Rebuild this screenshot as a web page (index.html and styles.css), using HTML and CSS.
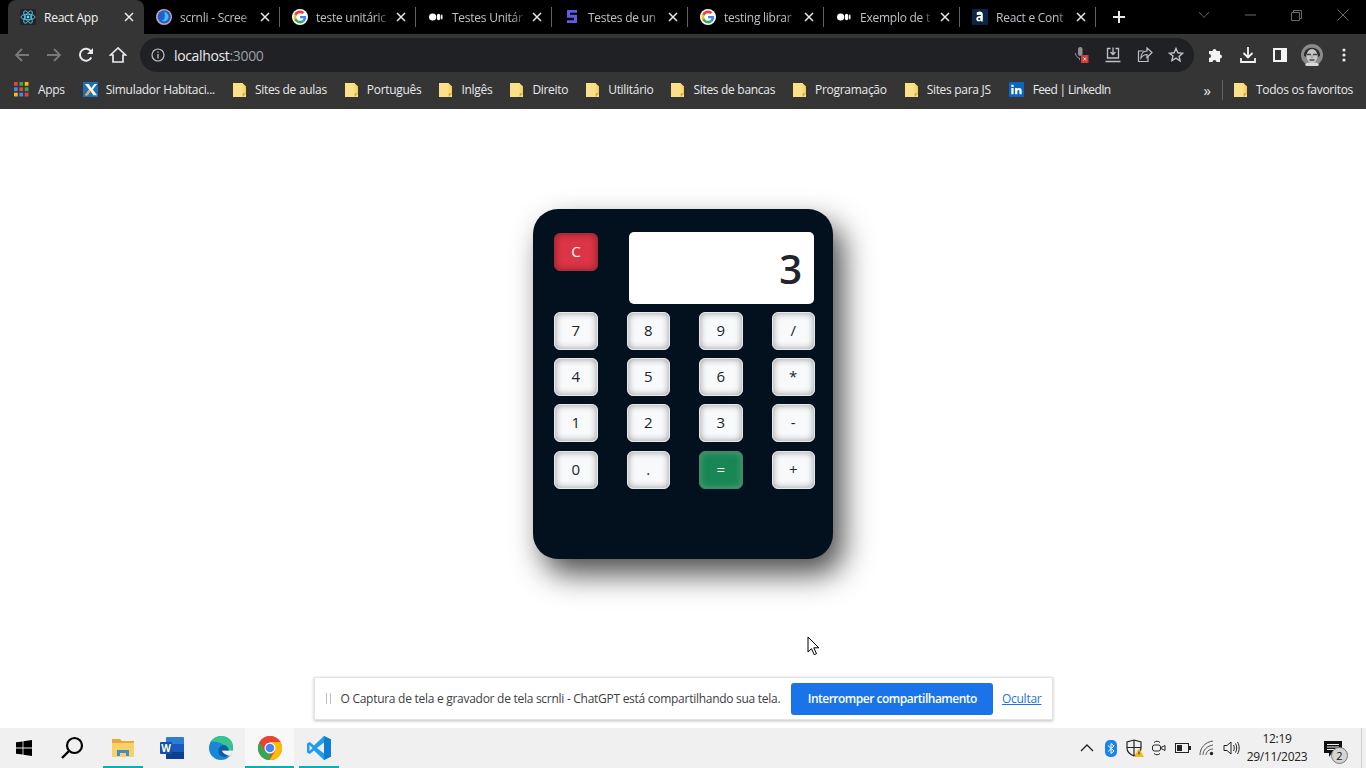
FILE: index.html
```html
<!DOCTYPE html>
<html lang="en">
<head>
    <meta charset="UTF-8">
    <title>React App</title>
    <link rel="stylesheet" href="styles.css">
</head>
<body>
    <svg class="sprite" xmlns="http://www.w3.org/2000/svg">
        <symbol id="ic-google" viewBox="-6 -6 60 60">
            <circle cx="24" cy="24" r="30" fill="#fff"/>
            <path fill="#EA4335" d="M24 9.5c3.54 0 6.71 1.22 9.21 3.6l6.85-6.85C35.9 2.38 30.47 0 24 0 14.62 0 6.51 5.38 2.56 13.22l7.98 6.19C12.43 13.72 17.74 9.5 24 9.5z"/>
            <path fill="#4285F4" d="M46.98 24.55c0-1.57-.15-3.09-.38-4.55H24v9.02h12.94c-.58 2.96-2.26 5.48-4.78 7.18l7.73 6c4.51-4.18 7.09-10.36 7.09-17.65z"/>
            <path fill="#FBBC05" d="M10.53 28.59c-.48-1.45-.76-2.99-.76-4.59s.27-3.14.76-4.59l-7.98-6.19C.92 16.46 0 20.12 0 24c0 3.88.92 7.54 2.56 10.78l7.97-6.19z"/>
            <path fill="#34A853" d="M24 48c6.48 0 11.93-2.13 15.89-5.81l-7.73-6c-2.15 1.45-4.92 2.3-8.16 2.3-6.26 0-11.57-4.22-13.47-9.91l-7.98 6.19C6.51 42.62 14.62 48 24 48z"/>
        </symbol>
        <symbol id="ic-medium" viewBox="0 0 16 16">
            <circle cx="4.6" cy="8" r="3.6" fill="#fff"/>
            <ellipse cx="10.6" cy="8" rx="1.8" ry="3.3" fill="#fff"/>
            <ellipse cx="13.8" cy="8" rx=".8" ry="2.8" fill="#fff"/>
        </symbol>
        <symbol id="ic-folder" viewBox="0 0 12 14">
            <path d="M0 1h8.600L12 4v10H0z" fill="#fdd663"/>
            <path d="M0 1h9v9.500h3V14H0z" fill="#fbe08a"/>
            <path d="M9 14v-3.500h3z" fill="#c9a63c"/>
        </symbol>
        <symbol id="ic-close" viewBox="0 0 10 10">
            <path d="M1 1l8 8M9 1L1 9" stroke="#e8eaed" stroke-width="1.5" fill="none"/>
        </symbol>
    </svg>

    <div class="tabstrip">
        <div class="tab tab-active">
            <svg class="tab-icon" viewBox="0 0 16 16">
                <rect width="16" height="16" rx="2" fill="#20232a"/>
                <circle cx="8" cy="8" r="1.4" fill="#61dafb"/>
                <g fill="none" stroke="#61dafb" stroke-width=".8">
                    <ellipse cx="8" cy="8" rx="7" ry="2.8"/>
                    <ellipse cx="8" cy="8" rx="7" ry="2.8" transform="rotate(60 8 8)"/>
                    <ellipse cx="8" cy="8" rx="7" ry="2.8" transform="rotate(120 8 8)"/>
                </g>
            </svg>
            <span class="tab-title">React App</span>
            <svg class="tab-close"><use href="#ic-close"/></svg>
        </div>
        <div class="tab">
            <svg class="tab-icon" viewBox="0 0 16 16">
                <circle cx="8" cy="8" r="8" fill="#d9a0b0"/>
                <circle cx="8.200" cy="7.800" r="6.600" fill="#1667c9"/>
                <path d="M8 3a5 5 0 0 1 4.500 6 5 5 0 0 1-7 2.700c3 0 4.500-4.500 2.500-8.700z" fill="#56b4f2"/>
            </svg>
            <span class="tab-title">scrnli - Scree</span>
            <svg class="tab-close"><use href="#ic-close"/></svg>
        </div>
        <div class="tab">
            <svg class="tab-icon"><use href="#ic-google"/></svg>
            <span class="tab-title">teste unitáric</span>
            <svg class="tab-close"><use href="#ic-close"/></svg>
        </div>
        <div class="tab">
            <svg class="tab-icon"><use href="#ic-medium"/></svg>
            <span class="tab-title">Testes Unitár</span>
            <svg class="tab-close"><use href="#ic-close"/></svg>
        </div>
        <div class="tab">
            <svg class="tab-icon" viewBox="0 0 16 16">
                <path d="M3 1h10v2.800H6v2h7V14H3v-2.800h7V8.800H3z" fill="#5c5ce6"/>
            </svg>
            <span class="tab-title">Testes de un</span>
            <svg class="tab-close"><use href="#ic-close"/></svg>
        </div>
        <div class="tab">
            <svg class="tab-icon"><use href="#ic-google"/></svg>
            <span class="tab-title">testing librar</span>
            <svg class="tab-close"><use href="#ic-close"/></svg>
        </div>
        <div class="tab">
            <svg class="tab-icon"><use href="#ic-medium"/></svg>
            <span class="tab-title">Exemplo de t</span>
            <svg class="tab-close"><use href="#ic-close"/></svg>
        </div>
        <div class="tab">
            <svg class="tab-icon" viewBox="0 0 16 16">
                <rect width="16" height="16" rx="1" fill="#0b2545"/>
                <path d="M4.800 3.200c3-1.200 6-.8 6 2.200v7h-1.800l-.2-1c-1.500 1.500-4.500 1.300-4.500-1.400 0-2.500 3-3 4.700-2.900 0-1.800-2-1.700-4.200-1z" fill="#fff"/>
                <circle cx="7.300" cy="9.900" r="1.100" fill="#0b2545"/>
            </svg>
            <span class="tab-title">React e Cont</span>
            <svg class="tab-close"><use href="#ic-close"/></svg>
        </div>
        <div class="tab-new">
            <svg width="14" height="14" viewBox="0 0 14 14"><path d="M7 1v12M1 7h12" stroke="#e8eaed" stroke-width="2"/></svg>
        </div>
        <div class="win-controls">
            <svg width="12" height="8" viewBox="0 0 12 8"><path d="M1 1l5 5.500L11 1" fill="none" stroke="#5f5f5f"/></svg>
            <svg width="11" height="2" viewBox="0 0 11 2"><path d="M0 1h11" stroke="#6a6a6a"/></svg>
            <svg width="11" height="11" viewBox="0 0 11 11"><path d="M.5 2.500h8v8h-8zM2.500 2.500v-2h8v8h-2" fill="none" stroke="#6a6a6a"/></svg>
            <svg width="12" height="12" viewBox="0 0 12 12"><path d="M.5 .5l11 11M11.500 .5l-11 11" stroke="#6a6a6a"/></svg>
        </div>
    </div>

    <div class="toolbar">
        <div class="nav-btn">
            <svg width="16" height="16" viewBox="0 0 16 16"><path d="M15 8H2M8 2L2 8l6 6" fill="none" stroke="#77797c" stroke-width="1.800"/></svg>
        </div>
        <div class="nav-btn">
            <svg width="16" height="16" viewBox="0 0 16 16"><path d="M1 8h13M8 2l6 6-6 6" fill="none" stroke="#77797c" stroke-width="1.800"/></svg>
        </div>
        <div class="nav-btn">
            <svg width="16" height="16" viewBox="0 0 16 16"><path d="M13.300 10.500A6 6 0 1 1 13 4.500" fill="none" stroke="#e8eaed" stroke-width="2"/><path d="M15 1v6H9z" fill="#e8eaed"/></svg>
        </div>
        <div class="nav-btn">
            <svg width="18" height="18" viewBox="0 0 18 18"><path d="M9 2L1.500 9H4v7h10V9h2.500z" fill="none" stroke="#e8eaed" stroke-width="1.700"/></svg>
        </div>
        <div class="omnibox">
            <svg class="omni-info" width="14" height="14" viewBox="0 0 14 14"><circle cx="7" cy="7" r="6" fill="none" stroke="#bdc1c6" stroke-width="1.200"/><path d="M7 6v4.500M7 3.500v1.300" stroke="#bdc1c6" stroke-width="1.300"/></svg>
            <span class="omni-url">localhost<span class="omni-port">:3000</span></span>
            <div class="omni-actions">
                <svg width="16" height="18" viewBox="0 0 16 18"><rect x="4" y="1" width="4.500" height="9" rx="2.200" fill="#8f9195"/><path d="M1.500 7c0 3 2 5 4 5M5.500 12v2" fill="none" stroke="#8f9195"/><rect x="7" y="9" width="7.500" height="8" fill="#d0403a"/><path d="M9.500 11.500l2.500 3M12 11.500l-2.500 3" stroke="#fff" stroke-width=".8"/></svg>
                <svg width="16" height="16" viewBox="0 0 16 16"><path d="M5.500 1.500h-3v9.500h11V1.500h-3M8 .5v6.500M5.500 5L8 7.500 10.500 5M.5 14.500h15" fill="none" stroke="#bdc1c6" stroke-width="1.300"/></svg>
                <svg width="16" height="16" viewBox="0 0 16 16"><path d="M6.500 4H1.500v10.500H11V10M15 5.500L10 1v3C6 4 4 7 4 11c1.500-2.500 3.500-3.500 6-3.500V10.500z" fill="none" stroke="#bdc1c6" stroke-width="1.200"/></svg>
                <svg width="16" height="16" viewBox="0 0 16 16"><path d="M8 1.500l1.900 4.300 4.600.5-3.400 3.100 1 4.600L8 11.100l-4.100 2.400 1-4.600L1.500 6.300l4.600-.5z" fill="none" stroke="#bdc1c6" stroke-width="1.400"/></svg>
            </div>
        </div>
        <div class="tool-icons">
            <svg width="16" height="16" viewBox="0 0 16 16"><path d="M1 4h3.500a2 2 0 1 1 4 0H12v3.500a2 2 0 1 1 0 4V15H8.500a2 2 0 1 0-4 0H1v-4a2 2 0 1 0 0-4z" fill="#f1f3f4"/></svg>
            <svg width="16" height="16" viewBox="0 0 16 16"><path d="M8 0v10M3.500 6L8 10.500 12.500 6M1 11v4h14v-4" fill="none" stroke="#f1f3f4" stroke-width="1.800"/></svg>
            <svg width="14" height="14" viewBox="0 0 14 14"><path d="M1 1h12v12H1z" fill="none" stroke="#f1f3f4" stroke-width="2"/><rect x="8" y="1" width="5" height="12" fill="#f1f3f4"/></svg>
            <svg width="22" height="22" viewBox="0 0 22 22"><circle cx="11" cy="11" r="11" fill="#8a8a8a"/><path d="M3 12C2 1 20 1 19 12l-2 1C17 6 5 6 5 13z" fill="#2c2c2c"/><ellipse cx="11" cy="12" rx="5.500" ry="7" fill="#c6c6c6"/><path d="M6 10.500h4M12 10.500h4M8.500 16h5" stroke="#444" stroke-width="1.300"/><path d="M11 11v3" stroke="#888"/><path d="M4 21c1-3 4-2.500 7-2.500s6-.5 7 2.500a11 11 0 0 1-14 0z" fill="#d8d8d8"/></svg>
            <svg width="4" height="14" viewBox="0 0 4 14"><circle cx="2" cy="2" r="1.600" fill="#e8eaed"/><circle cx="2" cy="7" r="1.600" fill="#e8eaed"/><circle cx="2" cy="12" r="1.600" fill="#e8eaed"/></svg>
        </div>
    </div>

    <div class="bookmarks">
        <div class="mark">
            <svg class="mark-icon" viewBox="0 0 14 14">
                <rect x="0" width="3.500" height="3.500" fill="#ea4335"/><rect x="5" width="3.500" height="3.500" fill="#34a853"/><rect x="10" width="3.500" height="3.500" fill="#fbbc05"/>
                <rect x="0" y="5" width="3.500" height="3.500" fill="#4285f4"/><rect x="5" y="5" width="3.500" height="3.500" fill="#ea4335"/><rect x="10" y="5" width="3.500" height="3.500" fill="#34a853"/>
                <rect x="0" y="10" width="3.500" height="3.500" fill="#fbbc05"/><rect x="5" y="10" width="3.500" height="3.500" fill="#4285f4"/><rect x="10" y="10" width="3.500" height="3.500" fill="#ea4335"/>
            </svg>
            <span>Apps</span>
        </div>
        <div class="mark mark-tight">
            <svg class="mark-icon" viewBox="0 0 16 16">
                <rect width="16" height="16" fill="#1c6fb8"/>
                <path d="M2 2h4l3 4.500L12 2h3L10.500 8 15 14h-4L8 9.500 5 14H2l4.500-6z" fill="#f4f4f4"/>
                <path d="M2 14l4.500-6L8 9.500 5 14z" fill="#f2a33a"/>
            </svg>
            <span>Simulador Habitaci...</span>
        </div>
        <div class="mark"><svg class="mark-icon folder"><use href="#ic-folder"/></svg><span>Sites de aulas</span></div>
        <div class="mark"><svg class="mark-icon folder"><use href="#ic-folder"/></svg><span>Português</span></div>
        <div class="mark"><svg class="mark-icon folder"><use href="#ic-folder"/></svg><span>Inlgês</span></div>
        <div class="mark"><svg class="mark-icon folder"><use href="#ic-folder"/></svg><span>Direito</span></div>
        <div class="mark"><svg class="mark-icon folder"><use href="#ic-folder"/></svg><span>Utilitário</span></div>
        <div class="mark"><svg class="mark-icon folder"><use href="#ic-folder"/></svg><span>Sites de bancas</span></div>
        <div class="mark"><svg class="mark-icon folder"><use href="#ic-folder"/></svg><span>Programação</span></div>
        <div class="mark"><svg class="mark-icon folder"><use href="#ic-folder"/></svg><span>Sites para JS</span></div>
        <div class="mark">
            <svg class="mark-icon" viewBox="0 0 16 16"><rect width="16" height="16" rx="1" fill="#0a66c2"/><path d="M2.500 6.500h2.400V13H2.500zM2.500 3h2.400v2.200H2.500zM6.500 6.500h2.300v1c1-1.500 4.700-1.700 4.700 1.800V13h-2.400V9.800c0-1.700-2.200-1.600-2.200 0V13H6.500z" fill="#fff"/></svg>
            <span class="mark-narrow">Feed | LinkedIn</span>
        </div>
        <div class="marks-end">
            <span class="marks-more">»</span>
            <i class="marks-sep"></i>
            <div class="mark"><svg class="mark-icon folder"><use href="#ic-folder"/></svg><span>Todos os favoritos</span></div>
        </div>
    </div>

    <main class="page">
        <div class="calculator">
            <div class="calc-top">
                <button class="key key-clear">C</button>
                <div class="calc-display">3</div>
            </div>
            <div class="calc-keys">
                <button class="key">7</button>
                <button class="key">8</button>
                <button class="key">9</button>
                <button class="key">/</button>
                <button class="key">4</button>
                <button class="key">5</button>
                <button class="key">6</button>
                <button class="key">*</button>
                <button class="key">1</button>
                <button class="key">2</button>
                <button class="key">3</button>
                <button class="key">-</button>
                <button class="key">0</button>
                <button class="key">.</button>
                <button class="key key-equals">=</button>
                <button class="key">+</button>
            </div>
        </div>

        <div class="share-bar">
            <i class="share-grip"></i>
            <span class="share-text">O Captura de tela e gravador de tela scrnli - ChatGPT está compartilhando sua tela.</span>
            <button class="share-stop">Interromper compartilhamento</button>
            <a class="share-hide" href="#">Ocultar</a>
        </div>

        <svg class="cursor" width="13" height="20" viewBox="0 0 13 20"><path d="M1 1v15l3.500-3.300 2.700 6 2.300-1-2.700-5.900h5z" fill="#fff" stroke="#000"/></svg>
    </main>

    <footer class="taskbar">
        <div class="task task-start">
            <svg width="16" height="16" viewBox="0 0 16 16"><path d="M0 2.300l6.600-.9v6.200H0zM7.400 1.300L16 0v7.600H7.400zM0 8.400h6.600v6.200L0 13.700zM7.400 8.400H16V16l-8.600-1.300z" fill="#000"/></svg>
        </div>
        <div class="task task-search">
            <svg width="24" height="24" viewBox="0 0 24 24"><circle cx="14.500" cy="9.500" r="7.500" fill="none" stroke="#000" stroke-width="2.200"/><path d="M9 15l-7 7" stroke="#000" stroke-width="2.400"/></svg>
        </div>
        <div class="task task-open">
            <svg width="22" height="18" viewBox="0 0 22 18"><path d="M0 0h8l2 2h12v3H0z" fill="#e8a93a"/><rect y="4" width="22" height="14" fill="#fad165"/><path d="M5 17v-6h12v6h-3v-3H8v3z" fill="#3f8fd0"/></svg>
        </div>
        <div class="task">
            <svg width="24" height="22" viewBox="0 0 24 22"><rect x="6" width="18" height="22" rx="1" fill="#2b7cd3"/><rect x="6" y="7" width="18" height="8" fill="#185abd"/><rect x="6" y="15" width="18" height="7" fill="#103f91"/><rect y="5" width="12" height="12" rx="1" fill="#1551a8"/><text class="word-w" x="6" y="14.500">W</text></svg>
        </div>
        <div class="task">
            <svg width="24" height="24" viewBox="0 0 24 24"><circle cx="12" cy="12" r="12" fill="#1a86d6"/><path d="M1.500 6C5 1.500 9.500 0 13 0c6.500 0 11 5 11 11 0 2.500-1.500 4-4 4H10c0-3.500 2.500-6 5.500-5.500C12 6 6 5 1.500 6z" fill="#35c48d"/><path d="M10 14.500h14c0 1-1 4-3.500 5.500-4 1-9.500-.5-10.500-5.500z" fill="#f0f0f0"/><path d="M9.500 15c0-4 3-6.500 6-6 2 .5 3.500 2 4.500 5.500H13c.5 2.500 3.500 4.500 7 5-4 3-11 1-10.500-4.500z" fill="#0f5ca6"/></svg>
        </div>
        <div class="task task-open task-active">
            <svg width="24" height="24" viewBox="0 0 24 24"><circle cx="12" cy="12" r="12" fill="#ea4335"/><path d="M12 24a12 12 0 0 1-10.400-18L7 15.300l5.500 2.700-.5 6z" fill="#34a853"/><path d="M1.600 6L7 15.300 12 6h10.400A12 12 0 0 0 1.600 6z" fill="#ea4335"/><path d="M22.400 6H12l5 9-5.500 9A12 12 0 0 0 22.400 6z" fill="#fbbc05"/><circle cx="12" cy="12" r="5.500" fill="#fff"/><circle cx="12" cy="12" r="4.300" fill="#4285f4"/></svg>
        </div>
        <div class="task task-open">
            <svg width="24" height="24" viewBox="0 0 24 24"><path d="M17 0l7 3.400v17.200L17 24 7 14.500 2.700 18 0 16.600V7.400L2.700 6 7 9.500z" fill="#1f9cf0"/><path d="M2.500 9v6L5.500 12z" fill="#f0f0f0"/><path d="M17 0l7 3.400v17.200L17 24z" fill="#0e7fd0"/><path d="M17 6.500L10 12l7 5.500z" fill="#f0f0f0"/></svg>
        </div>
        <div class="tray">
            <div class="tray-icons">
                <svg width="14" height="8" viewBox="0 0 14 8"><path d="M1 7l6-6 6 6" fill="none" stroke="#222" stroke-width="1.300"/></svg>
                <svg width="12" height="17" viewBox="0 0 12 17"><rect width="12" height="17" rx="5" fill="#1b84e8"/><path d="M3 5.500l6 5.500-3 2.500v-10l3 2.500-6 5.500" fill="none" stroke="#fff"/></svg>
                <svg width="18" height="18" viewBox="0 0 18 18"><path d="M8 1l7 2v6c0 4-3 6.500-7 8-4-1.500-7-4-7-8V3zM8 1v16M1 8.500h14" fill="none" stroke="#222" stroke-width="1.200"/><path d="M13 9l5 9H8z" fill="#f5b81f"/><path d="M13 12.500v3" stroke="#333"/></svg>
                <svg width="16" height="16" viewBox="0 0 16 16"><path d="M3 2.500C4.500.8 7.500.8 9 2.500M3 13.500c1.500 1.700 4.500 1.700 6 0" fill="none" stroke="#222"/><rect x="1.500" y="5" width="8" height="6" rx="2" fill="none" stroke="#222"/><path d="M10 7.500l4-2v5l-4-2" fill="none" stroke="#222"/></svg>
                <svg width="16" height="10" viewBox="0 0 16 10"><rect x=".5" y=".5" width="13" height="9" fill="none" stroke="#222"/><rect x="2" y="2" width="5" height="6" fill="#222"/><rect x="14" y="3" width="2" height="4" fill="#222"/></svg>
                <svg width="16" height="16" viewBox="0 0 16 16"><path d="M1 15C1 8 6 2 14 1M4 15c0-5 4-9 10-10M7 15c0-3 3-6 7-6" fill="none" stroke="#555"/><circle cx="12.500" cy="13.500" r="1.700" fill="#222"/></svg>
                <svg width="17" height="16" viewBox="0 0 17 16"><path d="M1 5.500h3L8 2v12l-4-3.500H1z" fill="none" stroke="#222"/><path d="M10.500 5c1 1.800 1 4.200 0 6M12.500 3.500c1.600 2.700 1.600 6.300 0 9M14.500 2c2.200 3.700 2.200 8.300 0 12" fill="none" stroke="#222"/></svg>
            </div>
            <div class="clock"><span>12:19</span><span>29/11/2023</span></div>
            <div class="notify">
                <svg width="18" height="16" viewBox="0 0 18 16"><path d="M0 0h18v12H8l-3 4v-4H0z" fill="#111"/><path d="M3 3.500h12M3 6h12M3 8.500h8" stroke="#f0f0f0"/></svg>
                <span class="notify-badge">2</span>
            </div>
            <i class="desk-edge"></i>
        </div>
    </footer>
</body>
</html>
```

FILE: styles.css
```css
* {
    box-sizing: border-box;
}

body {
    margin: 0;
    width: 1366px;
    height: 768px;
    overflow: hidden;
    display: flex;
    flex-direction: column;
    font-family: "Open Sans", "Noto Sans", sans-serif;
    background-color: #fff;
}

.sprite {
    display: none;
}

/* Tabs */
.tabstrip {
    height: 34px;
    padding-left: 8px;
    display: flex;
    background-color: #000;
    color: #bdc1c6;
    font-size: 12px;
}

.tab {
    width: 136px;
    height: 34px;
    flex: none;
    padding: 0 10px 0 12px;
    display: flex;
    align-items: center;
    position: relative;
}

.tab::after {
    content: "";
    position: absolute;
    right: 0;
    top: 7px;
    height: 20px;
    width: 1px;
    background-color: #5f6368;
}

.tab-active {
    background-color: #353535;
    border-radius: 8px 8px 0 0;
    color: #f1f3f4;
}

.tab-active::after {
    display: none;
}

.tab-icon {
    width: 16px;
    height: 16px;
    flex: none;
}

.tab-title {
    flex: 1;
    margin: 0 6px 0 8px;
    white-space: nowrap;
    overflow: hidden;
    letter-spacing: -0.25px;
    -webkit-mask-image: linear-gradient(to right, #000 82%, transparent 100%);
    mask-image: linear-gradient(to right, #000 82%, transparent 100%);
}

.tab-active .tab-title {
    -webkit-mask-image: none;
    mask-image: none;
}

.tab-close {
    width: 10px;
    height: 10px;
    flex: none;
}

.tab-new {
    width: 46px;
    flex: none;
    display: flex;
    align-items: center;
    justify-content: center;
}

.win-controls {
    flex: 1;
    padding: 0 17px 0 56px;
    display: flex;
    align-items: center;
    justify-content: space-between;
    margin-top: -4px;
}

/* Toolbar */
.toolbar {
    height: 38px;
    padding: 4px 0 0 6px;
    display: flex;
    align-items: center;
    background-color: #353535;
}

.nav-btn {
    width: 32px;
    height: 34px;
    flex: none;
    display: flex;
    align-items: center;
    justify-content: center;
}

.omnibox {
    width: 1054px;
    height: 34px;
    flex: none;
    margin-left: 6px;
    padding: 0 10px 0 11px;
    display: flex;
    align-items: center;
    background-color: #202124;
    border-radius: 17px;
}

.omni-url {
    margin-left: 9px;
    color: #e8eaed;
    font-size: 14px;
    letter-spacing: -0.35px;
}

.omni-port {
    color: #9aa0a6;
}

.omni-actions {
    margin-left: auto;
    width: 110px;
    display: flex;
    align-items: center;
    justify-content: space-between;
}

.tool-icons {
    margin-left: 6px;
    display: grid;
    grid-template-columns: repeat(5, 32px);
    justify-items: center;
    align-items: center;
}

/* Bookmarks */
.bookmarks {
    height: 37px;
    padding: 0 13px 2px 14px;
    display: flex;
    align-items: center;
    gap: 18px;
    background-color: #353535;
    color: #e8eaed;
    font-size: 12px;
}

.mark {
    display: flex;
    align-items: center;
    gap: 9px;
    white-space: nowrap;
    letter-spacing: -0.3px;
}

.mark-tight {
    gap: 8px;
}

.mark-narrow {
    letter-spacing: -0.65px;
}

.mark-icon {
    width: 15px;
    height: 15px;
    flex: none;
}

.folder {
    width: 13px;
    height: 15px;
}

.marks-end {
    margin-left: auto;
    display: flex;
    align-items: center;
}

.marks-more {
    font-size: 15px;
}

.marks-sep {
    width: 1px;
    height: 20px;
    margin: 0 11px;
    background-color: #5f6368;
}

/* Page */
.page {
    flex: 1;
    padding: 100px 0 8px;
    display: flex;
    flex-direction: column;
    align-items: center;
    justify-content: space-between;
    position: relative;
}

.calculator {
    width: 300px;
    height: 350px;
    padding: 23px 18px 0 21px;
    background-color: #02111d;
    border-radius: 25px;
    box-shadow: 10px 15px 30px rgba(0, 0, 0, 0.7);
}

.calc-top {
    height: 80px;
    display: flex;
    justify-content: space-between;
}

.calc-top .key {
    margin-top: 1px;
    width: 44px;
}

.calc-display {
    width: 185px;
    height: 72px;
    margin-right: 1px;
    padding: 0 12px;
    display: flex;
    align-items: center;
    justify-content: flex-end;
    background-color: #fff;
    border-radius: 5px;
    color: #212529;
    font-size: 40px;
    font-weight: 600;
}

.calc-keys {
    display: grid;
    grid-template-columns: repeat(4, 43.5px);
    justify-content: space-between;
    row-gap: 8.2px;
}

.key {
    height: 38px;
    padding: 0 0 2px;
    background-color: #f8f9fa;
    border: 1px solid #e6e8ea;
    border-radius: 6px;
    box-shadow: inset 0 0 7px rgba(0, 0, 0, 0.4);
    color: #212529;
    font-family: inherit;
    font-size: 15px;
}

.key-clear {
    background-color: #dc3545;
    border-color: #a82a37;
    color: #fff;
}

.key-equals {
    background-color: #198754;
    border-color: #3e8a68;
    box-shadow: inset 0 0 7px rgba(170, 170, 170, 0.5);
    color: #fff;
}

/* Screen share notice */
.share-bar {
    width: 739px;
    height: 43px;
    padding: 0 10px 0 11px;
    display: flex;
    align-items: center;
    background-color: #fff;
    border: 1px solid #e3e3e3;
    box-shadow: 0 1px 3px rgba(0, 0, 0, 0.25);
    font-size: 12px;
    color: #3c4043;
}

.share-grip {
    width: 5px;
    height: 11px;
    flex: none;
    border-left: 1px solid #bdbdbd;
    border-right: 1px solid #bdbdbd;
}

.share-text {
    margin-left: 10px;
    white-space: nowrap;
    letter-spacing: -0.275px;
}

.share-stop {
    width: 202px;
    height: 32px;
    margin-left: 11px;
    flex: none;
    background-color: #1a73e8;
    border: none;
    border-radius: 3px;
    color: #fff;
    font-family: inherit;
    font-size: 12px;
    font-weight: 600;
    letter-spacing: -0.5px;
}

.share-hide {
    margin-left: auto;
    color: #1a73e8;
    letter-spacing: -0.25px;
}

.cursor {
    position: absolute;
    left: 807px;
    top: 527px;
}

/* Taskbar */
.taskbar {
    height: 40px;
    flex: none;
    display: flex;
    align-items: center;
    background-color: #f0f0f0;
}

.task {
    width: 49px;
    height: 40px;
    flex: none;
    display: flex;
    align-items: center;
    justify-content: center;
    position: relative;
}

.task-start,
.task-search {
    width: 48px;
}

.task-search {
    margin-right: 2px;
}

.task-open::after {
    content: "";
    position: absolute;
    left: 5px;
    right: 4px;
    bottom: 0;
    height: 2px;
    background-color: #00b4b4;
}

.task-active {
    background-color: #f8f8f8;
}

.task-active::after {
    left: 0;
    right: 0;
}

.word-w {
    fill: #fff;
    font-size: 10px;
    font-weight: 700;
    text-anchor: middle;
}

.tray {
    margin-left: auto;
    padding-right: 4px;
    display: flex;
    align-items: center;
}

.tray-icons {
    display: grid;
    grid-auto-flow: column;
    grid-auto-columns: 24px;
    justify-items: center;
    align-items: center;
}

.clock {
    width: 68px;
    display: flex;
    flex-direction: column;
    align-items: center;
    font-size: 12px;
    line-height: 18px;
    color: #222;
    letter-spacing: -0.3px;
}

.notify {
    width: 28px;
    height: 28px;
    margin-left: 8px;
    padding: 6px 0 0 5px;
    position: relative;
}

.notify-badge {
    position: absolute;
    right: -1px;
    bottom: -2px;
    width: 17px;
    height: 17px;
    border-radius: 50%;
    background-color: #d4d4d4;
    border: 1px solid #777;
    font-size: 11px;
    line-height: 15px;
    text-align: center;
    color: #111;
}

.desk-edge {
    width: 1px;
    height: 40px;
    margin-left: 14px;
    background-color: #d0d0d0;
}
```
